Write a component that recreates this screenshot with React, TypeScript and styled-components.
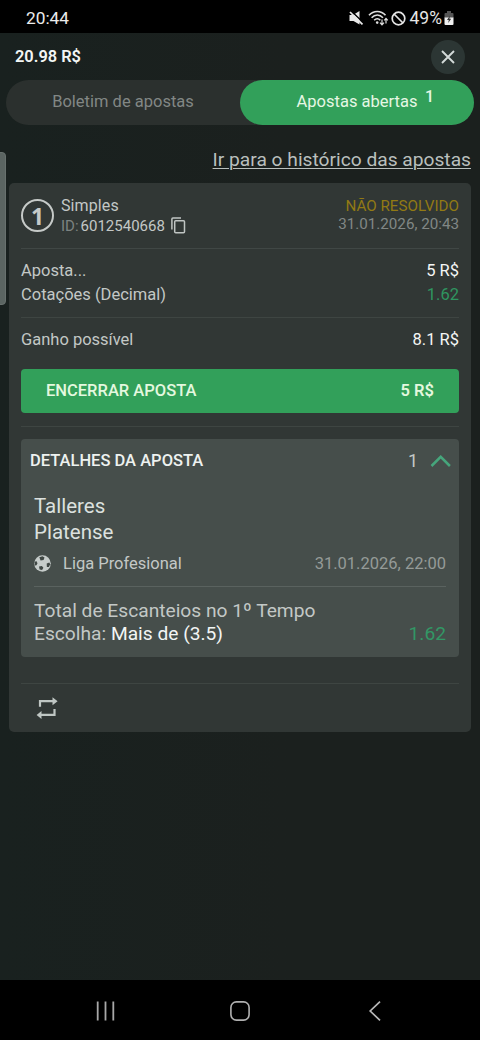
import React from 'react';
import styled, { createGlobalStyle } from 'styled-components';

const Global = createGlobalStyle`
  * { box-sizing: border-box; }
  body { margin: 0; background: #1b211f; font-family: Roboto, "Liberation Sans", sans-serif; }
`;

const Screen = styled.div`
  position: relative;
  width: 480px;
  height: 1040px;
  display: flex;
  flex-direction: column;
  overflow: hidden;
  background: linear-gradient(90deg, #19211f 0%, #1b201e 60%, #1b201e 100%);
`;

const Txt = styled.span<{ $size: number; $color?: string; $weight?: number; $ls?: number }>`
  font-size: ${p => p.$size}px;
  color: ${p => p.$color ?? '#c3c8c6'};
  font-weight: ${p => p.$weight ?? 400};
  letter-spacing: ${p => p.$ls ?? 0}px;
  white-space: nowrap;
`;

const StatusBar = styled.div`
  height: 33px;
  flex: none;
  display: flex;
  align-items: center;
  justify-content: space-between;
  padding: 3px 25px 0 26px;
  background: #000;
`;

const StatusIcons = styled.div`
  display: flex;
  align-items: center;
  height: 30px;
`;

const Gap = styled.span<{ $w: number }>`
  width: ${p => p.$w}px;
`;

const TopBar = styled.header`
  height: 47px;
  flex: none;
  display: flex;
  align-items: center;
  justify-content: space-between;
  padding: 0 15px;
`;

const CloseButton = styled.button`
  width: 34px;
  height: 34px;
  padding: 0;
  border: 0;
  border-radius: 50%;
  background: #2c3634;
  display: flex;
  align-items: center;
  justify-content: center;
`;

const Tabs = styled.nav`
  height: 45px;
  flex: none;
  margin: 0 6px;
  display: flex;
  border-radius: 23px;
  background: #2b302e;
`;

const Tab = styled.button<{ $active?: boolean }>`
  position: relative;
  flex: 1;
  display: flex;
  align-items: center;
  justify-content: center;
  padding: 0 0 2px;
  border: 0;
  border-radius: 23px;
  font-family: inherit;
  background: ${p => (p.$active ? '#32a05a' : 'transparent')};
`;

const TabCount = styled.sup`
  position: absolute;
  right: 40px;
  top: 8px;
  line-height: 18px;
  font-size: 16px;
  font-weight: 500;
  color: #e6f7e4;
`;

const HistoryRow = styled.div`
  height: 58px;
  flex: none;
  display: flex;
  justify-content: flex-end;
  align-items: center;
  padding: 11px 9px 0 0;
`;

const HistoryLink = styled.a`
  font-size: 19.2px;
  color: #b9bfbd;
  text-decoration: underline;
  text-decoration-thickness: 1.3px;
  text-underline-offset: 2px;
`;

const ScrollHandle = styled.div`
  position: absolute;
  left: -4px;
  top: 152px;
  width: 10px;
  height: 153px;
  border-radius: 4px;
  background: #5b6562;
  border: 1px solid #68716e;
`;

const Card = styled.section`
  height: 549px;
  flex: none;
  margin: 0 9px;
  padding: 0 12px;
  display: flex;
  flex-direction: column;
  border-radius: 5px;
  background: #313735;
  & > * { flex-shrink: 0; }
`;

const CardHead = styled.div`
  height: 66px;
  display: flex;
  justify-content: space-between;
  padding-top: 12px;
  border-bottom: 1px solid #404745;
`;

const BetKind = styled.div`
  display: flex;
  gap: 7px;
`;

const NumberBadge = styled.div`
  width: 33px;
  height: 33px;
  margin-top: 4px;
  display: flex;
  align-items: center;
  justify-content: center;
  border: 2px solid #c6cac8;
  border-radius: 50%;
  font: 700 23px "Open Sans", sans-serif;
  color: #c6cac8;
`;

const Stack = styled.div<{ $line: number; $end?: boolean; $top?: number }>`
  display: flex;
  flex-direction: column;
  align-items: ${p => (p.$end ? 'flex-end' : 'flex-start')};
  line-height: ${p => p.$line}px;
  padding-top: ${p => p.$top ?? 0}px;
`;

const IdLine = styled.div`
  display: flex;
  align-items: center;
  gap: 2px;
`;

const CopyButton = styled.button`
  display: flex;
  margin: -2px 0 0 4px;
  padding: 0;
  border: 0;
  background: none;
`;

const Section = styled.div<{ $height: number; $top: number }>`
  height: ${p => p.$height}px;
  padding-top: ${p => p.$top}px;
  border-bottom: 1px solid #3e4542;
`;

const Row = styled.div<{ $height: number }>`
  height: ${p => p.$height}px;
  display: flex;
  align-items: center;
  justify-content: space-between;
`;

const CashOut = styled.button`
  width: 100%;
  height: 44px;
  margin-top: 8px;
  padding: 0 25px 1px;
  display: flex;
  align-items: center;
  justify-content: space-between;
  border: 0;
  border-radius: 4px;
  background: #32a05a;
  font-family: inherit;
`;

const Details = styled.div`
  height: 218px;
  margin-top: 12px;
  border-radius: 4px;
  background: #464e4b;
`;

const DetailsHead = styled.div`
  height: 43px;
  display: flex;
  align-items: center;
  padding: 0 8px 0 9px;
  justify-content: space-between;
`;

const Expander = styled.div`
  display: flex;
  align-items: center;
  gap: 12px;
`;

const Match = styled.div`
  margin: 0 13px;
  padding-top: 11px;
`;

const League = styled.div`
  height: 42px;
  display: flex;
  align-items: center;
  justify-content: space-between;
  padding-bottom: 4px;
  border-bottom: 1px solid #5a625f;
`;

const LeagueName = styled.div`
  display: flex;
  align-items: center;
  gap: 12px;
`;

const Market = styled.div`
  padding-top: 12px;
`;

const CardFoot = styled.div`
  margin-top: 26px;
  padding: 12px 15px;
  border-top: 1px solid #3e4542;
`;

const NavBar = styled.footer`
  height: 60px;
  flex: none;
  margin-top: auto;
  display: flex;
  align-items: center;
  justify-content: space-around;
  padding: 2px 38px 0 38px;
  background: #000;
`;

const MuteIcon = () => (
  <svg width="16" height="16" viewBox="0 0 16 16" fill="#e8e8e8">
    <path d="M1.500 5h3.500L11.500 1v13.500L5.500 11H1.500z" />
    <path d="M3.200 1 15.500 12.800" stroke="#000" strokeWidth="1.500" />
    <path d="M2 2 14.500 14.300" stroke="#e8e8e8" strokeWidth="1.700" />
  </svg>
);

const WifiIcon = () => (
  <svg width="21" height="18" viewBox="0 0 21 18" fill="none" stroke="#dedede" strokeWidth="1.600">
    <path d="M1 6.300C5.500 1.200 13 1.200 17.500 6.300M3.600 8.800C7 5.100 11.700 5.100 15 8.800M6.200 11.300C8 9.300 10.600 9.300 12.300 11.300" />
    <circle cx="9.200" cy="13.600" r="1.300" fill="#dedede" stroke="none" />
    <path d="M14 10.500v5M12 13.600l2 2.200 2-2.200M18 14.500V9.500M16.300 11.300 18 9.300l1.800 2" strokeWidth="1.200" />
  </svg>
);

const BlockIcon = () => (
  <svg width="15" height="15" viewBox="0 0 15 15" fill="none" stroke="#e4e4e4" strokeWidth="1.700">
    <circle cx="7.500" cy="7.500" r="6.300" />
    <path d="M3 3l9 9" />
  </svg>
);

const BatteryIcon = () => (
  <svg width="10" height="15" viewBox="0 0 10 15">
    <path d="M3 0h4v2h1.500a1 1 0 0 1 1 1v4h-9V3a1 1 0 0 1 1-1H3z" fill="#555" />
    <path d="M.5 6.500h9v6.500a1 1 0 0 1-1 1h-7a1 1 0 0 1-1-1z" fill="#f0f0f0" />
    <path d="M6 4.500 3 8.900h1.800L4.200 12 7.200 7.800H5.400z" fill="#333" />
  </svg>
);

const CloseIcon = () => (
  <svg width="14" height="14" viewBox="0 0 14 14" stroke="#d3dad8" strokeWidth="1.900">
    <path d="M1 1l12 12M13 1 1 13" />
  </svg>
);

const CopyIcon = () => (
  <svg width="15" height="17" viewBox="0 0 15 17" fill="none" stroke="#c0c5c3" strokeWidth="1.500">
    <path d="M.9 12.500V1.900a1 1 0 0 1 1-1H10" />
    <rect x="3.700" y="3.800" width="9.800" height="12" rx="1" />
  </svg>
);

const ChevronUp = () => (
  <svg width="21" height="13" viewBox="0 0 21 13" fill="none" stroke="#46a67c" strokeWidth="2.500">
    <path d="M1.500 12 10.700 2.800l9.200 9.200" />
  </svg>
);

const BallIcon = () => (
  <svg width="17" height="17" viewBox="0 0 17 17">
    <circle cx="8.500" cy="8.500" r="8.300" fill="#c6ccca" />
    <g fill="#3f4744">
      <path d="M5.300 2.200 8.500 1.300l2 1.300-.9 2.300-3 .5z" />
      <path d="M.6 7 2.300 6l1.200 2.200-1 2-1.700.3z" />
      <path d="M12.700 8.600 15.300 7.500l.9 1.700-1.300 2.700-2 .1z" />
      <path d="M5 11.600l2.900-.6 1.500 1.800-1.300 2.200-2.500-.4z" />
    </g>
  </svg>
);

const RepeatIcon = () => (
  <svg width="22" height="24" viewBox="0 0 22 24" fill="none" stroke="#bfc6c3" strokeWidth="2.200">
    <path d="M4 10.800V5.200H17M18.500 13v5.900H5" />
    <path d="M16.500 1.200v8L21.600 5.200zM5.500 14.900v8L.6 18.900z" fill="#bfc6c3" stroke="none" />
  </svg>
);

const RecentsIcon = () => (
  <svg width="20" height="20" viewBox="0 0 20 20" stroke="#a8a8a8" strokeWidth="1.800">
    <path d="M2.700.5v19M10.500.5v19M18.300.5v19" />
  </svg>
);

const HomeIcon = () => (
  <svg width="20" height="20" viewBox="0 0 20 20" fill="none" stroke="#b0b0b0" strokeWidth="1.600">
    <rect x=".9" y=".9" width="18.200" height="18.200" rx="5.500" />
  </svg>
);

const BackIcon = () => (
  <svg width="20" height="20" viewBox="0 0 20 20" fill="none" stroke="#b8b8b8" strokeWidth="1.700">
    <path d="M15 .6 5.200 10l9.800 9.400" />
  </svg>
);

export default function App() {
  return (
    <>
      <Global />
      <Screen>
        <StatusBar>
          <Txt $size={17.3} $color="#ececec">20:44</Txt>
          <StatusIcons>
            <MuteIcon />
            <Gap $w={4} />
            <WifiIcon />
            <Gap $w={2} />
            <BlockIcon />
            <Gap $w={4} />
            <Txt $size={17.5} $color="#e6e6e6">49%</Txt>
            <Gap $w={2} />
            <BatteryIcon />
            <Gap $w={1} />
          </StatusIcons>
        </StatusBar>
        <TopBar>
          <Txt $size={16.4} $weight={600} $color="#f3f6f5">20.98 R$</Txt>
          <CloseButton aria-label="Fechar"><CloseIcon /></CloseButton>
        </TopBar>
        <Tabs>
          <Tab><Txt $size={16.5} $color="#828785">Boletim de apostas</Txt></Tab>
          <Tab $active>
            <Txt $size={16.5} $color="#e6f7e4">Apostas abertas</Txt>
            <TabCount>1</TabCount>
          </Tab>
        </Tabs>
        <HistoryRow><HistoryLink>Ir para o histórico das apostas</HistoryLink></HistoryRow>
        <ScrollHandle />
        <Card>
          <CardHead>
            <BetKind>
              <NumberBadge>1</NumberBadge>
              <Stack $line={21}>
                <Txt $size={16} $ls={0.1}>Simples</Txt>
                <IdLine>
                  <Txt $size={15} $color="#7d8381">ID:</Txt>
                  <Txt $size={15}>6012540668</Txt>
                  <CopyButton aria-label="Copiar"><CopyIcon /></CopyButton>
                </IdLine>
              </Stack>
            </BetKind>
            <Stack $line={18} $end $top={2}>
              <Txt $size={15.2} $color="#927a14">NÃO RESOLVIDO</Txt>
              <Txt $size={15.2} $color="#818785">31.01.2026, 20:43</Txt>
            </Stack>
          </CardHead>
          <Section $height={69} $top={9}>
            <Row $height={24}>
              <Txt $size={16.5}>Aposta...</Txt>
              <Txt $size={16.5} $color="#f4f6f5">5 R$</Txt>
            </Row>
            <Row $height={24}>
              <Txt $size={16.5}>Cotações (Decimal)</Txt>
              <Txt $size={16.5} $color="#2f9560">1.62</Txt>
            </Row>
          </Section>
          <Section $height={109} $top={0}>
            <Row $height={43}>
              <Txt $size={16.5}>Ganho possível</Txt>
              <Txt $size={16.5} $color="#f4f6f5">8.1 R$</Txt>
            </Row>
            <CashOut>
              <Txt $size={16.5} $weight={500} $color="#e4f8df">ENCERRAR APOSTA</Txt>
              <Txt $size={16.5} $weight={600} $color="#e4f8df">5 R$</Txt>
            </CashOut>
          </Section>
          <Details>
            <DetailsHead>
              <Txt $size={16.5} $weight={500} $color="#eef2f0">DETALHES DA APOSTA</Txt>
              <Expander>
                <Txt $size={18}>1</Txt>
                <ChevronUp />
              </Expander>
            </DetailsHead>
            <Match>
              <Stack $line={26}>
                <Txt $size={20.5} $color="#dce1df">Talleres</Txt>
                <Txt $size={20.5} $color="#dce1df">Platense</Txt>
              </Stack>
              <League>
                <LeagueName>
                  <BallIcon />
                  <Txt $size={16.5}>Liga Profesional</Txt>
                </LeagueName>
                <Txt $size={16.5} $color="#959b98">31.01.2026, 22:00</Txt>
              </League>
              <Market>
                <Row $height={23}><Txt $size={19.2}>Total de Escanteios no 1º Tempo</Txt></Row>
                <Row $height={23}>
                  <Txt $size={19.2}>Escolha: <Txt $size={19.2} $color="#f2f5f4">Mais de (3.5)</Txt></Txt>
                  <Txt $size={19.2} $color="#329765">1.62</Txt>
                </Row>
              </Market>
            </Match>
          </Details>
          <CardFoot><RepeatIcon /></CardFoot>
        </Card>
        <NavBar>
          <RecentsIcon />
          <HomeIcon />
          <BackIcon />
        </NavBar>
      </Screen>
    </>
  );
}
